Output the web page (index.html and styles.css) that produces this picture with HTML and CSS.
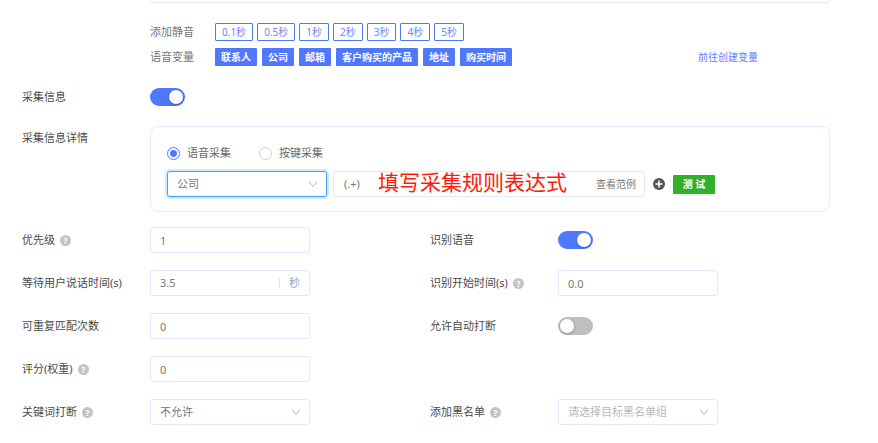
FILE: index.html
```
<!DOCTYPE html>
<html lang="zh-CN">
<head>
    <meta charset="UTF-8">
    <meta name="viewport" content="width=device-width, initial-scale=1.0">
    <title>采集信息</title>
    <link rel="stylesheet" href="styles.css">
</head>
<body>
    <form class="page">
        <!-- Voice text -->
        <div class="row">
            <div class="content">
                <div class="editor-end"></div>
                <div class="tags outline">
                    <span class="tags-label">添加静音</span>
                    <button type="button">0.1秒</button>
                    <button type="button">0.5秒</button>
                    <button type="button">1秒</button>
                    <button type="button">2秒</button>
                    <button type="button">3秒</button>
                    <button type="button">4秒</button>
                    <button type="button">5秒</button>
                </div>
                <div class="tags solid">
                    <span class="tags-label">语音变量</span>
                    <button type="button">联系人</button>
                    <button type="button">公司</button>
                    <button type="button">邮箱</button>
                    <button type="button">客户购买的产品</button>
                    <button type="button">地址</button>
                    <button type="button">购买时间</button>
                    <a class="create-link" href="#">前往创建变量</a>
                </div>
            </div>
        </div>

        <!-- Collect switch -->
        <div class="row collect">
            <label for="collect">采集信息</label>
            <input type="checkbox" class="switch" id="collect" checked>
        </div>

        <!-- Collect detail -->
        <div class="row detail">
            <label for="field">采集信息详情</label>
            <div class="panel">
                <div class="radios">
                    <label><input type="radio" name="mode" checked>语音采集</label>
                    <label><input type="radio" name="mode">按键采集</label>
                </div>
                <div class="rule">
                    <div class="select-box active">
                        <select id="field"><option>公司</option></select>
                        <svg class="arrow" viewBox="0 0 10 8"><path d="M1 1.5 5 6.5 9 1.5"/></svg>
                    </div>
                    <div class="rule-input">
                        <input type="text" value="(.+)" aria-label="采集规则">
                        <a href="#">查看范例</a>
                        <span class="note">填写采集规则表达式</span>
                    </div>
                    <button type="button" class="add" aria-label="添加">
                        <svg viewBox="0 0 12 12"><circle cx="6" cy="6" r="6"/><path d="M6 2.5v7M2.5 6h7"/></svg>
                    </button>
                    <button type="button" class="test">测 试</button>
                </div>
            </div>
        </div>

        <!-- Settings -->
        <div class="settings">
            <label for="priority">优先级 <span class="help">?</span></label>
            <input type="text" class="box" id="priority" value="1">
            <label for="recognize">识别语音</label>
            <input type="checkbox" class="switch" id="recognize" checked>

            <label for="wait">等待用户说话时间(s)</label>
            <div class="unit-box">
                <input type="text" id="wait" value="3.5">
                <span class="unit">秒</span>
            </div>
            <label for="start">识别开始时间(s) <span class="help">?</span></label>
            <input type="text" class="box" id="start" value="0.0">

            <label for="repeat">可重复匹配次数</label>
            <input type="text" class="box" id="repeat" value="0">
            <label for="interrupt">允许自动打断</label>
            <input type="checkbox" class="switch" id="interrupt">

            <label for="score">评分(权重) <span class="help">?</span></label>
            <input type="text" class="box full" id="score" value="0">

            <label for="keyword">关键词打断 <span class="help">?</span></label>
            <div class="select-box">
                <select id="keyword"><option>不允许</option></select>
                <svg class="arrow" viewBox="0 0 10 8"><path d="M1 1.5 5 6.5 9 1.5"/></svg>
            </div>
            <label for="blacklist">添加黑名单 <span class="help">?</span></label>
            <div class="select-box empty">
                <select id="blacklist"><option>请选择目标黑名单组</option></select>
                <svg class="arrow" viewBox="0 0 10 8"><path d="M1 1.5 5 6.5 9 1.5"/></svg>
            </div>
        </div>
    </form>
</body>
</html>
```
FILE: styles.css
```
* {
    box-sizing: border-box;
}

body {
    margin: 0;
    background-color: #fff;
    color: #4a4a4a;
    font-family: "Noto Sans", "Noto Sans CJK SC", sans-serif;
    font-size: 11px;
    line-height: 18px;
}

input, select, button {
    font: inherit;
    color: inherit;
    margin: 0;
}

.page {
    padding: 0 48px 16px 22px;
}

/* Rows */
.row {
    display: grid;
    grid-template-columns: 128px 1fr;
}

.content {
    grid-column: 2;
}

.collect {
    margin-top: 22px;
}

.detail {
    margin-top: 20px;
}

.detail > label {
    padding-top: 3px;
}

.editor-end {
    height: 3px;
    border: 1px solid #e6ebff;
    border-top: none;
    border-radius: 0 0 8px 8px;
}

/* Tags */
.tags {
    display: flex;
    align-items: center;
    color: #777;
}

.tags-label {
    width: 65px;
}

.tags button {
    height: 18px;
    padding: 0 6px;
    border: 1px solid #4f78ff;
    border-radius: 1px;
    font-size: 10px;
    line-height: 16px;
    cursor: pointer;
}

.outline {
    margin-top: 20px;
}

.outline button {
    margin-right: 4px;
    background-color: #fff;
    color: #6f86f5;
}

.solid {
    margin-top: 7px;
}

.solid button {
    margin-right: 5px;
    border: none;
    background-color: #4f78ff;
    color: #fff;
    font-weight: bold;
}

.create-link {
    margin-left: auto;
    margin-right: 72px;
    color: #5f7dfa;
    font-size: 10px;
    text-decoration: none;
}

/* Switch */
.switch {
    appearance: none;
    width: 35px;
    height: 18px;
    padding: 2px;
    border-radius: 9px;
    background-color: #bfbfbf;
    cursor: pointer;
}

.switch::before {
    content: "";
    display: block;
    width: 14px;
    height: 14px;
    border-radius: 50%;
    background-color: #fff;
    box-shadow: 0 1px 3px rgba(0, 0, 0, 0.25);
}

.switch:checked {
    background-color: #4f78ff;
}

.switch:checked::before {
    margin-left: auto;
}

/* Detail panel */
.panel {
    padding: 17px 16px 14px;
    border: 1px solid #e6ebff;
    border-radius: 8px;
}

.radios {
    display: flex;
    gap: 28px;
    color: #666;
}

.radios label {
    display: flex;
    align-items: center;
    gap: 7px;
}

.radios input {
    appearance: none;
    width: 13px;
    height: 13px;
    border: 1px solid #d0d0d0;
    border-radius: 50%;
}

.radios input:checked {
    border-color: #4f78ff;
    background: radial-gradient(circle, #4f78ff 3px, #fff 4px);
}

.rule {
    display: flex;
    align-items: center;
    margin-top: 9px;
    color: #777;
}

.rule-input {
    position: relative;
    display: flex;
    align-items: center;
    width: 312px;
    height: 26px;
    margin-left: 6px;
    padding: 0 8px 0 10px;
    border: 1px solid #e0e7ff;
    border-radius: 3px;
}

.rule-input input {
    flex: 1;
    min-width: 0;
    padding: 0;
    border: none;
    outline: none;
}

.rule-input a {
    color: #777;
    font-size: 10px;
    text-decoration: none;
}

/* Note written over the input */
.note {
    position: absolute;
    left: 44px;
    top: 0;
    color: #ff1a0a;
    font-size: 21px;
    line-height: 20px;
    white-space: nowrap;
    pointer-events: none;
}

.add {
    display: flex;
    width: 12px;
    height: 12px;
    margin-left: 8px;
    padding: 0;
    border: none;
    background: none;
}

.add svg {
    width: 12px;
    height: 12px;
    fill: #555;
    stroke: #fff;
    stroke-width: 1.6;
}

.add circle {
    stroke: none;
}

.test {
    width: 42px;
    height: 19px;
    margin-left: 8px;
    padding: 0;
    border: none;
    border-radius: 1px;
    background-color: #32b02b;
    box-shadow: 0 2px 0 rgba(0, 0, 0, 0.05);
    color: #fff;
    font-size: 10px;
    font-weight: bold;
}

/* Inputs and selects */
.box, .unit-box, .select-box select {
    width: 160px;
    height: 26px;
    padding: 0 9px;
    border: 1px solid #e0e7ff;
    border-radius: 3px;
    background-color: #fff;
    color: #777;
}

.unit-box {
    display: flex;
    align-items: center;
}

.unit-box input {
    flex: 1;
    min-width: 0;
    padding: 0;
    border: none;
    outline: none;
}

.unit {
    padding-left: 9px;
    border-left: 1px solid #e4e4ec;
    color: #9a9fb8;
    line-height: 10px;
}

.select-box {
    position: relative;
    width: 160px;
}

.select-box select {
    display: block;
    appearance: none;
}

.arrow {
    position: absolute;
    right: 9px;
    top: 9px;
    width: 10px;
    height: 8px;
    fill: none;
    stroke: #bbb;
    pointer-events: none;
}

.select-box.active select {
    border-color: #40a0ff;
    box-shadow: 0 0 0 2px rgba(24, 144, 255, 0.2);
}

.select-box.empty select {
    color: #b8b8b8;
}

/* Settings */
.settings {
    display: grid;
    grid-template-columns: 128px 280px 128px 1fr;
    grid-auto-rows: 26px;
    row-gap: 17px;
    align-items: center;
    margin-top: 15px;
}

.settings label {
    display: flex;
    align-items: center;
    gap: 5px;
}

.full {
    grid-column: 2 / -1;
}

.help {
    width: 11px;
    height: 11px;
    border-radius: 50%;
    background-color: #c4c4c4;
    color: #fff;
    font-size: 8px;
    font-weight: bold;
    line-height: 11px;
    text-align: center;
}
```
